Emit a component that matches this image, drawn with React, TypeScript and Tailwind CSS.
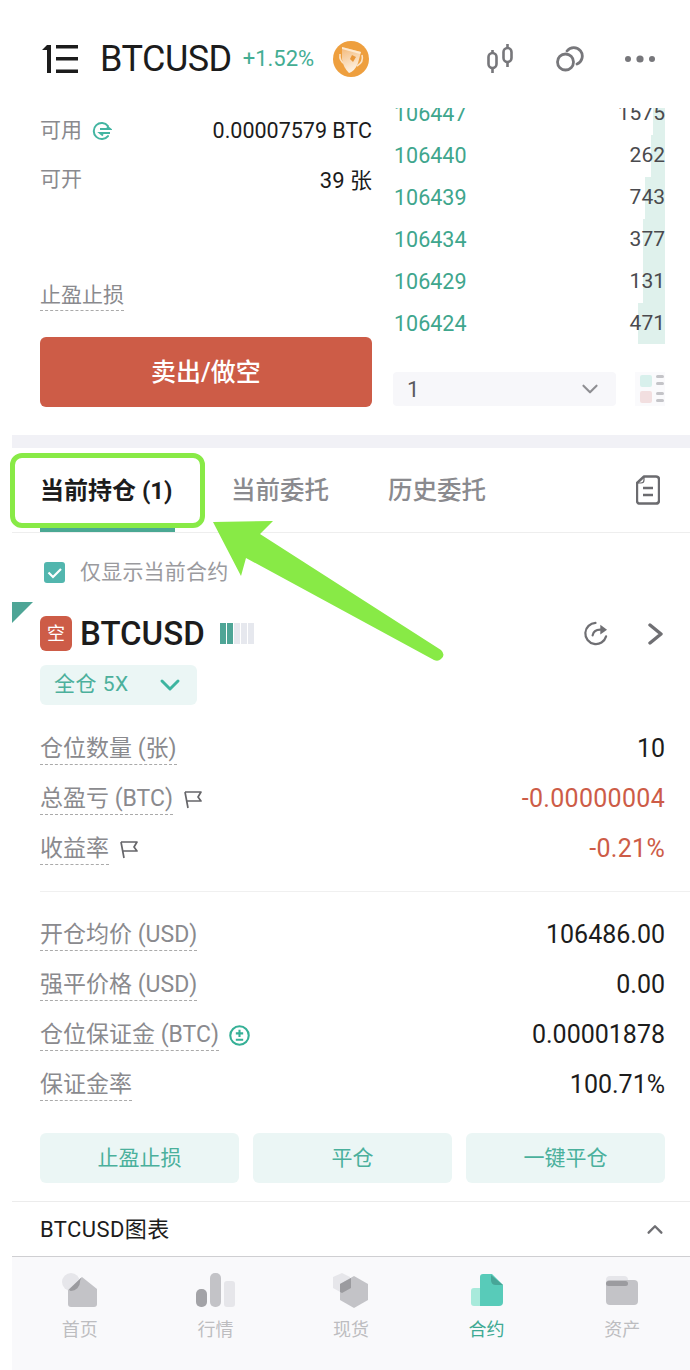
const font = { fontFamily: '"Roboto", "Noto Sans CJK SC", sans-serif' }

const asks = [
  { price: '106440', qty: '262', bar: 'w-[14px]' },
  { price: '106439', qty: '743', bar: 'w-[20px]' },
  { price: '106434', qty: '377', bar: 'w-[22px]' },
  { price: '106429', qty: '131', bar: 'w-[22px]' },
  { price: '106424', qty: '471', bar: 'w-[27px]' },
]

function Logo() {
  return (
    <svg width="36" height="28" viewBox="0 0 36 28" fill="#1c1c1c">
      <path d="M0 5 L5 0 H9 V28 H5 V5 Z" />
      <rect x="14" y="0" width="22" height="3.5" />
      <rect x="14" y="12" width="22" height="3.5" />
      <rect x="14" y="24.5" width="22" height="3.5" />
    </svg>
  )
}

function Coin() {
  return (
    <svg width="36" height="36" viewBox="0 0 36 36">
      <defs>
        <linearGradient id="cup" x1="0" y1="0" x2="0.3" y2="1">
          <stop offset="0" stopColor="#f3b877" />
          <stop offset="1" stopColor="#fdf1e2" />
        </linearGradient>
      </defs>
      <circle cx="18" cy="18" r="18" fill="#ee9f3e" />
      <path d="M7 13 Q6 20 12 23 M29 14 Q31 21 24 25" fill="none" stroke="#fbe3c6" strokeWidth="1.6" />
      <path d="M9 6 L28 11 L25 22 Q22 30 16 32 Q10 26 9 18 Z" fill="url(#cup)" />
      <path d="M9 6 L28 11 L27 13 L9 8 Z" fill="#fde9d0" />
      <path d="M19 14 L23 16 L20 21 L17 18 Z" fill="#e9973a" />
    </svg>
  )
}

function HeaderIcons() {
  return (
    <div className="flex items-center">
      <svg width="26" height="30" viewBox="0 0 26 30" fill="none" stroke="#77777b" strokeWidth="2.6">
        <rect x="1.5" y="9" width="8" height="15" rx="4" />
        <path d="M5.5 6 V9 M5.5 24 V29" />
        <rect x="16.5" y="4" width="8" height="14" rx="4" />
        <path d="M20.5 0 V4 M20.5 18 V23" />
      </svg>
      <svg className="ml-[43px]" width="28" height="26" viewBox="0 0 28 26" fill="none" stroke="#77777b" strokeWidth="2.8">
        <circle cx="9.5" cy="16" r="8" />
        <path d="M11 5 A8.5 8.5 0 1 1 21 18" strokeLinecap="round" />
      </svg>
      <svg className="ml-[41px]" width="30" height="10" viewBox="0 0 30 10" fill="#77777b">
        <circle cx="3" cy="5" r="3" />
        <circle cx="15" cy="5" r="3.6" />
        <circle cx="27" cy="5" r="3" />
      </svg>
    </div>
  )
}

function Chevron({ dir, color, size, width = 2.6 }: { dir: 'up' | 'down' | 'right'; color: string; size: number; width?: number }) {
  const d = dir === 'up' ? 'M4 15 L11 8 L18 15' : dir === 'down' ? 'M3 7 L11 15 L19 7' : 'M6 2 L17 11 L6 20'
  return (
    <svg width={size} height={size} viewBox="0 0 22 22" fill="none" stroke={color} strokeWidth={width} strokeLinecap="round" strokeLinejoin="round">
      <path d={d} />
    </svg>
  )
}

function Flag() {
  return (
    <svg width="20" height="20" viewBox="0 0 20 20" fill="none" stroke="#66666a" strokeWidth="1.7" strokeLinejoin="round">
      <path d="M2 3 H18 L15 8 L18 12 H4 M2 3 L5 19" />
    </svg>
  )
}

function Row({ label, value, tone, after }: { label: string; value: string; tone?: string; after?: React.ReactNode }) {
  return (
    <div className="flex h-[50px] items-center justify-between pt-[2px]">
      <div className="flex items-center gap-[10px]">
        <span className="border-b border-dashed border-[#aaaaaa] text-[23px] leading-[31px] text-[#8a8a8e]">{label}</span>
        {after}
      </div>
      <span className={`text-[25px] ${tone ?? 'text-[#1c1c1c]'}`}>{value}</span>
    </div>
  )
}

function NavItem({ label, active, children }: { label: string; active?: boolean; children: React.ReactNode }) {
  return (
    <div className="flex w-[136px] flex-col items-center">
      <div className="flex h-[40px] items-center justify-center">{children}</div>
      <span className={`mt-[8px] text-[18px] leading-[24px] ${active ? 'text-[#3eaa93]' : 'text-[#bdbdc0]'}`}>{label}</span>
    </div>
  )
}

export default function App() {
  const red = 'text-[#cd5c47] tracking-[0.3px]'
  const actionBtn = 'h-[50px] rounded-[6px] bg-[#ebf6f5] pt-[2px] text-[21px] text-[#4ab09c]'

  return (
    <div className="relative h-[1370px] w-[690px] overflow-hidden bg-white" style={font}>
      {/* header */}
      <div className="flex h-[104px] items-center pl-[40px] pr-[35px] pt-[14px]">
        <div className="ml-[2px]"><Logo /></div>
        <span className="ml-[22px] text-[36px] tracking-[-0.5px] text-[#1c1c1c]">BTCUSD</span>
        <span className="ml-[11px] mt-[-2px] text-[22px] text-[#43ad93]">+1.52%</span>
        <div className="ml-[19px]"><Coin /></div>
        <div className="ml-auto"><HeaderIcons /></div>
      </div>

      {/* order form + book */}
      <div className="flex h-[331px] pl-[40px] pr-[25px]">
        <div className="flex w-[332px] flex-col">
          <div className="mt-[7px] flex h-[40px] items-center justify-between">
            <div className="flex items-center gap-[10px]">
              <span className="text-[21px] text-[#8a8a8e]">可用</span>
              <svg width="20" height="20" viewBox="0 0 20 20" fill="none" stroke="#43b5a2" strokeWidth="2">
                <path d="M16 5 A 8 8 0 1 0 16 15" strokeLinecap="round" />
                <path d="M8 8 H18 L15 5.5 M18 12 H8 L11 14.5" />
              </svg>
            </div>
            <span className="text-[21.5px] text-[#1c1c1c]">0.00007579 BTC</span>
          </div>
          <div className="mt-[9px] flex h-[40px] items-center justify-between">
            <span className="text-[21px] text-[#8a8a8e]">可开</span>
            <span className="text-[22px] text-[#1c1c1c]">39 张</span>
          </div>
          <div className="mt-[75px] flex h-[40px] items-center">
            <span className="border-b border-dashed border-[#aaaaaa] text-[21px] leading-[30px] text-[#8a8a8e]">止盈止损</span>
          </div>
          <button className="mt-[22px] h-[70px] rounded-[6px] bg-[#cd5c47] pt-[2px] text-[25px] font-medium text-white">卖出/做空</button>
        </div>

        <div className="ml-[21px] flex flex-1 flex-col">
          <div className="mt-[4px] h-[236px] overflow-hidden">
            <div className="mt-[-15px]">
              <div className="relative flex h-[42px] items-center justify-between pl-px">
                <div className="absolute bottom-0 right-0 top-0 w-[12px] bg-[#dff1ec]" />
                <span className="text-[21.5px] text-[#3fa68d]">106447</span>
                <span className="relative text-[21px] text-[#4a4a4e]">1575</span>
              </div>
              {asks.map((a) => (
                <div key={a.price} className="relative flex h-[42px] items-center justify-between pl-px">
                  <div className={`absolute bottom-0 right-0 top-0 bg-[#dff1ec] ${a.bar}`} />
                  <span className="text-[21.5px] text-[#3fa68d]">{a.price}</span>
                  <span className="relative text-[21px] text-[#4a4a4e]">{a.qty}</span>
                </div>
              ))}
            </div>
          </div>
          <div className="mt-[28px] flex items-center justify-between">
            <div className="flex h-[34px] w-[223px] items-center justify-between rounded-[4px] bg-[#f7f7fa] pl-[14px] pr-[17px]">
              <span className="text-[22px] text-[#5a5a5e]">1</span>
              <Chevron dir="down" color="#8f8f93" size={18} />
            </div>
            <svg width="30" height="34" viewBox="0 0 30 34">
              <rect width="30" height="34" fill="#fafafc" />
              <rect x="5" y="3" width="12" height="12" rx="2" fill="#d8f0ec" />
              <rect x="5" y="19" width="12" height="12" rx="2" fill="#f2dfe0" />
              <rect x="21" y="3" width="8" height="3" rx="1.5" fill="#c4c4c8" />
              <rect x="21" y="10" width="8" height="3" rx="1.5" fill="#c4c4c8" />
              <rect x="21" y="20" width="8" height="3" rx="1.5" fill="#c4c4c8" />
              <rect x="21" y="27" width="8" height="3" rx="1.5" fill="#c4c4c8" />
            </svg>
          </div>
        </div>
      </div>

      <div className="ml-[12px]">
        <div className="h-[13px] bg-[#f1f1f6]" />

        {/* tabs */}
        <div className="flex h-[85px] items-center border-b border-[#eeeeee] pl-[28px] pr-[30px]">
          <div className="relative flex h-full w-[135px] items-center pt-[2px]">
            <span className="whitespace-nowrap text-[24px] font-bold text-[#1c1c1c]">当前持仓 (1)</span>
            <div className="absolute bottom-0 left-0 right-0 h-[4px] bg-[#4aa893]" />
          </div>
          <span className="ml-[56px] pt-[2px] text-[24.5px] font-medium text-[#8a8a8e]">当前委托</span>
          <span className="ml-[59px] pt-[2px] text-[24.5px] font-medium text-[#8a8a8e]">历史委托</span>
          <svg className="ml-auto" width="24" height="30" viewBox="0 0 24 30" fill="none" stroke="#6b6b6f" strokeWidth="2.4" strokeLinejoin="round">
            <path d="M8 1.5 H20 Q23 1.5 23 4.5 V25.5 Q23 28.5 20 28.5 H4 Q1 28.5 1 25.5 V8 Z" />
            <path d="M8 1.5 V5 Q8 8 5 8 H1" strokeWidth="1.2" />
            <path d="M7 13 H17 M7 20 H17" />
          </svg>
        </div>

        {/* position */}
        <div className="relative pl-[28px] pr-[25px]">
          <div className="flex h-[69px] items-center gap-[15px] pl-[4px] pt-[10px]">
            <div className="flex h-[21px] w-[21px] items-center justify-center rounded-[3px] bg-[#52b6ae]">
              <svg width="15" height="12" viewBox="0 0 15 12" fill="none" stroke="white" strokeWidth="2.2">
                <path d="M1.5 5.5 L6 10 L14 2" />
              </svg>
            </div>
            <span className="text-[21px] tracking-[0.2px] text-[#9a9a9e]">仅显示当前合约</span>
          </div>

          <svg className="absolute left-0 top-[69px]" width="21" height="21" viewBox="0 0 21 21">
            <path d="M0 0 H21 L0 21 Z" fill="#4ea596" />
          </svg>

          <div className="mt-[14px] flex h-[35px] items-center">
            <div className="flex h-[35px] w-[32px] items-center justify-center rounded-[6px] bg-[#cd5c47] text-[18px] text-white">空</div>
            <span className="ml-[8px] text-[33px] font-medium text-[#1c1c1c]">BTCUSD</span>
            <div className="ml-[15px] flex h-[21px] gap-px">
              <div className="w-[6px] bg-[#4ea596]" />
              <div className="w-[6px] bg-[#4ea596]" />
              <div className="w-[6px] bg-[#e6e8ee]" />
              <div className="w-[6px] bg-[#e6e8ee]" />
              <div className="w-[6px] bg-[#e6e8ee]" />
            </div>
            <svg className="ml-auto" width="25" height="25" viewBox="0 0 26 26" fill="none" stroke="#6f6f73" strokeWidth="2.3" strokeLinecap="round">
              <path d="M13 2 A 11 11 0 1 0 24 16" />
              <path d="M10 15 Q11 9 18 9" />
              <path d="M18 4 L25 9 L18 14 Z" fill="#6f6f73" stroke="none" />
            </svg>
            <div className="ml-[36px] mr-[-1px]"><Chevron dir="right" color="#6f6f73" size={22} width={3.4} /></div>
          </div>

          <div className="mt-[14px] flex h-[40px] w-[157px] items-center justify-between rounded-[6px] bg-[#ebf6f5] pl-[14px] pr-[16px]">
            <span className="text-[21px] tracking-[0.5px] text-[#4cb09c]">全仓 5X</span>
            <Chevron dir="down" color="#3db5a0" size={22} width={3} />
          </div>

          <div className="mt-[18px]">
            <Row label="仓位数量 (张)" value="10" />
            <Row label="总盈亏 (BTC)" value="-0.00000004" tone={red} after={<Flag />} />
            <Row label="收益率" value="-0.21%" tone={red} after={<Flag />} />
          </div>

          <div className="mr-[-25px] mt-[18px] h-px bg-[#f0f0f0]" />

          <div className="mt-[17px]">
            <Row label="开仓均价 (USD)" value="106486.00" />
            <Row label="强平价格 (USD)" value="0.00" />
            <Row
              label="仓位保证金 (BTC)"
              value="0.00001878"
              after={
                <svg width="21" height="21" viewBox="0 0 20 20" fill="none" stroke="#35b096" strokeWidth="2">
                  <circle cx="10" cy="10" r="8.8" />
                  <path d="M6.5 8 H13.5 M10 4.5 V11.5 M6.5 14 H13.5" />
                </svg>
              }
            />
            <Row label="保证金率" value="100.71%" />
          </div>

          <div className="mt-[24px] grid grid-cols-3 gap-[14px]">
            <button className={actionBtn}>止盈止损</button>
            <button className={actionBtn}>平仓</button>
            <button className={actionBtn}>一键平仓</button>
          </div>
        </div>

        {/* chart row */}
        <div className="mt-[18px] flex h-[55px] items-center justify-between border-t border-[#ececec] pl-[28px] pr-[25px]">
          <span className="text-[22px] tracking-[0.4px] text-[#1c1c1c]">BTCUSD图表</span>
          <Chevron dir="up" color="#6f6f73" size={20} width={2.6} />
        </div>

        {/* bottom nav */}
        <div className="flex h-[114px] border-t border-[#cfcfd2] bg-[#f9f9fb] pt-[13px]">
          <NavItem label="首页">
            <svg width="36" height="34" viewBox="0 0 36 34">
              <circle cx="9" cy="9" r="9" fill="#e6e6ea" />
              <path d="M20 4 L35 16 V31 Q35 34 32 34 H9 Q6 34 6 31 V17 Z" fill="#c3c3c7" />
              <path d="M19.5 4.5 L7 16.5 Q8 18 9 18 A9 9 0 0 0 18 9 Q18 7 19.5 4.5 Z" fill="#9b9b9f" />
            </svg>
          </NavItem>
          <NavItem label="行情">
            <svg width="39" height="34" viewBox="0 0 39 34">
              <rect x="0" y="16" width="11" height="18" rx="5" fill="#a3a3a7" />
              <rect x="14" y="0" width="11" height="34" rx="5" fill="#c3c3c7" />
              <rect x="28" y="8" width="11" height="26" rx="3" fill="#e6e6ea" />
            </svg>
          </NavItem>
          <NavItem label="现货">
            <svg width="35" height="35" viewBox="0 0 35 35">
              <path d="M9 0 L17 4 V15 L9 20 L0 15 V4 Z" fill="#e6e6ea" />
              <path d="M21 3 L35 11 V27 L21 35 L7 27 V11 Z" fill="#c3c3c7" />
              <path d="M18 5 V15 L9 20 L7 19 V11 Z" fill="#9b9b9f" />
            </svg>
          </NavItem>
          <NavItem label="合约" active>
            <svg width="32" height="32" viewBox="0 0 32 32">
              <rect x="0" y="14" width="12" height="18" rx="3" fill="#a8eadb" />
              <path d="M9 3 Q9 0 12 0 H21 L32 11 V28 Q32 32 28 32 H9 Z" fill="#58cbb9" />
              <path d="M20 1 L32 11 H25 Q20 11 20 6 Z" fill="#47a597" />
            </svg>
          </NavItem>
          <NavItem label="资产">
            <svg width="32" height="29" viewBox="0 0 32 29">
              <rect x="0" y="0" width="22" height="10" rx="4" fill="#e6e6ea" />
              <rect x="0" y="4" width="32" height="25" rx="4" fill="#c3c3c7" />
              <rect x="0" y="5" width="22" height="5" rx="2.5" fill="#9b9b9f" />
            </svg>
          </NavItem>
        </div>
      </div>

      {/* green annotation over the screenshot */}
      <div className="absolute left-[10px] top-[453px] h-[75px] w-[195px] rounded-[12px] border-[5px] border-[#88ea46]" />
      <svg className="absolute left-[205px] top-[515px]" width="245" height="152" viewBox="205 515 245 152">
        <path d="M213 522 L273 521 L260 534 L441 650 Q446 655 441 659 Q438 662 434 660 L246 558 L241 576 Z" fill="#88ea46" />
      </svg>
    </div>
  )
}
